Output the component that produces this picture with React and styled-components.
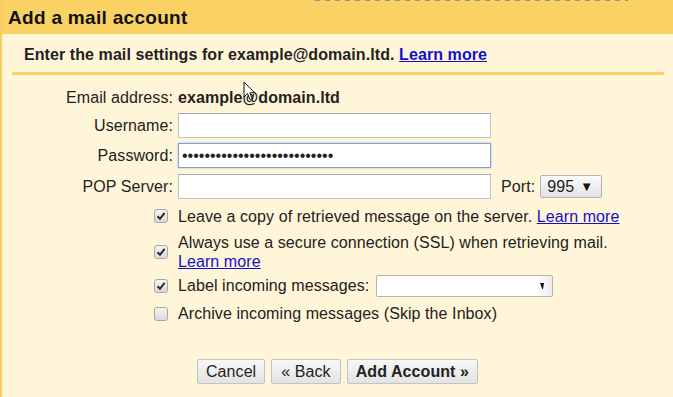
import React from "react";
import styled, { createGlobalStyle } from "styled-components";

const GlobalStyle = createGlobalStyle`
  body {
    margin: 0;
    background: #fff5d8;
    font-family: "Liberation Sans", Arial, sans-serif;
    font-size: 16px;
    line-height: 19px;
    letter-spacing: 0.08px;
    color: #222;
  }
`;

const Page = styled.div`
  position: relative;
  min-height: 397px;
  box-sizing: border-box;
  border-left: 2px solid #f9cd62;
  background: #fff5d8;
`;

const Header = styled.div`
  height: 34px;
  box-sizing: border-box;
  padding: 7px 0 0 6px;
  background: #fad163;
  font-size: 19px;
  line-height: 22px;
  letter-spacing: 0.3px;
  font-weight: bold;
  color: #111;
`;

const Dashes = styled.div`
  position: absolute;
  top: 0;
  left: 313px;
  width: 313px;
  height: 1px;
  background: repeating-linear-gradient(90deg, #9c9888 0 5px, transparent 5px 10px);
`;

const Intro = styled.div`
  margin: 0 9px 0 10px;
  padding: 11px 0 8px 12px;
  font-weight: bold;
  border-bottom: 3px solid #fad163;
`;

const Link = styled.a`
  color: #1111cc;
  text-decoration: underline;
  cursor: pointer;
`;

const Form = styled.div`
  display: flex;
  flex-direction: column;
  padding-top: 13px;
`;

const Row = styled.div`
  display: grid;
  grid-template-columns: 171px 1fr;
  column-gap: 5px;
  align-items: center;
  margin-top: ${(p) => p.$top || 0}px;
`;

const Label = styled.span`
  text-align: right;
`;

const Value = styled.span`
  font-weight: bold;
`;

const Field = styled.div`
  display: flex;
  align-items: center;
`;

const Input = styled.input`
  width: 313px;
  height: 25px;
  box-sizing: border-box;
  margin: 0;
  padding: 0 3px;
  background: #fff;
  border: 1px solid ${(p) => (p.$focus ? "#7da4d8" : "#c2c2c2")};
  border-top-color: ${(p) => (p.$focus ? "#7da4d8" : "#a9a9a9")};
  box-shadow: ${(p) => (p.$focus ? "0 0 2px #9fc0e8" : "none")};
  font-family: "Liberation Sans", Arial, sans-serif;
  font-size: 16px;
  color: #222;
  outline: none;
`;

const PortLabel = styled.span`
  margin-left: 10px;
`;

const FakeSelect = styled.div`
  display: flex;
  align-items: center;
  justify-content: space-between;
  box-sizing: border-box;
  width: ${(p) => p.$width}px;
  height: ${(p) => p.$height}px;
  margin-left: ${(p) => p.$left}px;
  padding: 0 ${(p) => p.$pad}px 0 6px;
  border: 1px solid #b4b4b4;
  border-radius: 2px;
  background: ${(p) =>
    p.$plain ? "linear-gradient(90deg, #fff 92%, #ececec)" : "linear-gradient(#fbfbfb, #e2e2e2)"};
  font-size: 16px;
  color: #222;
`;

const Arrow = styled.span`
  font-size: 13px;
  color: #111;
`;

const Box = styled.span`
  justify-self: end;
  margin-right: 5px;
  width: 14px;
  height: 14px;
  box-sizing: border-box;
  border: 1px solid #a8a8a8;
  border-radius: 3px;
  background: linear-gradient(#f4f4f4, #dadada);
  display: flex;
  align-items: center;
  justify-content: center;
`;

const Buttons = styled.div`
  display: flex;
  justify-content: center;
  gap: 6px;
  margin-top: 36px;
`;

const Button = styled.button`
  height: 25px;
  margin: 0;
  padding: 0 ${(p) => (p.$wide ? 9 : 8)}px;
  border: 1px solid #c3c3c3;
  border-radius: 2px;
  background: linear-gradient(#f7f7f7, #e3e3e3);
  font-family: "Liberation Sans", Arial, sans-serif;
  font-size: 16px;
  letter-spacing: 0.08px;
  font-weight: ${(p) => (p.$primary ? "bold" : "normal")};
  color: #222;
`;

const Pointer = styled.svg`
  position: absolute;
  left: 241px;
  top: 81px;
`;

function CheckBox({ checked }) {
  return (
    <Box>
      {checked && (
        <svg width="10" height="10" viewBox="0 0 10 10">
          <path d="M1.5 5.2 L4 7.8 L8.6 1.8" fill="none" stroke="#2a2a2a" strokeWidth="2" />
        </svg>
      )}
    </Box>
  );
}

export default function App() {
  return (
    <Page>
      <GlobalStyle />
      <Header>Add a mail account</Header>
      <Dashes />
      <Intro>
        Enter the mail settings for example@domain.ltd. <Link>Learn more</Link>
      </Intro>
      <Form>
        <Row>
          <Label>Email address:</Label>
          <Value>example@domain.ltd</Value>
        </Row>
        <Row $top={5.5}>
          <Label>Username:</Label>
          <Field>
            <Input type="text" defaultValue="" />
          </Field>
        </Row>
        <Row $top={5.5}>
          <Label>Password:</Label>
          <Field>
            <Input type="password" $focus defaultValue="passwordpasswordpassword123" />
          </Field>
        </Row>
        <Row $top={5.5}>
          <Label>POP Server:</Label>
          <Field>
            <Input type="text" defaultValue="" />
            <PortLabel>Port:</PortLabel>
            <FakeSelect $width={62} $height={23} $left={5} $pad={8}>
              995
              <Arrow>▼</Arrow>
            </FakeSelect>
          </Field>
        </Row>
        <Row $top={8.4}>
          <CheckBox checked />
          <span>
            Leave a copy of retrieved message on the server. <Link>Learn more</Link>
          </span>
        </Row>
        <Row $top={7}>
          <CheckBox checked />
          <span>
            Always use a secure connection (SSL) when retrieving mail.
            <br />
            <Link>Learn more</Link>
          </span>
        </Row>
        <Row $top={4}>
          <CheckBox checked />
          <Field>
            Label incoming messages:
            <FakeSelect $plain $width={177} $height={22} $left={7} $pad={8}>
              <span />
              <svg width="4" height="6" viewBox="0 0 4 6">
                <polygon points="0,0 4,0 3,6 2.2,6" fill="#111" />
              </svg>
            </FakeSelect>
          </Field>
        </Row>
        <Row $top={7.2}>
          <CheckBox />
          <span>Archive incoming messages (Skip the Inbox)</span>
        </Row>
        <Buttons>
          <Button>Cancel</Button>
          <Button $wide>« Back</Button>
          <Button $primary>Add Account »</Button>
        </Buttons>
      </Form>
      <Pointer width="13" height="20" viewBox="0 0 13 20">
        <path
          d="M1 1 L1 16 L4.5 12.5 L7 18.5 L9.2 17.6 L6.8 11.8 L11.5 11.8 Z"
          fill="#fff"
          stroke="#111"
          strokeWidth="1"
          strokeLinejoin="round"
        />
      </Pointer>
    </Page>
  );
}
